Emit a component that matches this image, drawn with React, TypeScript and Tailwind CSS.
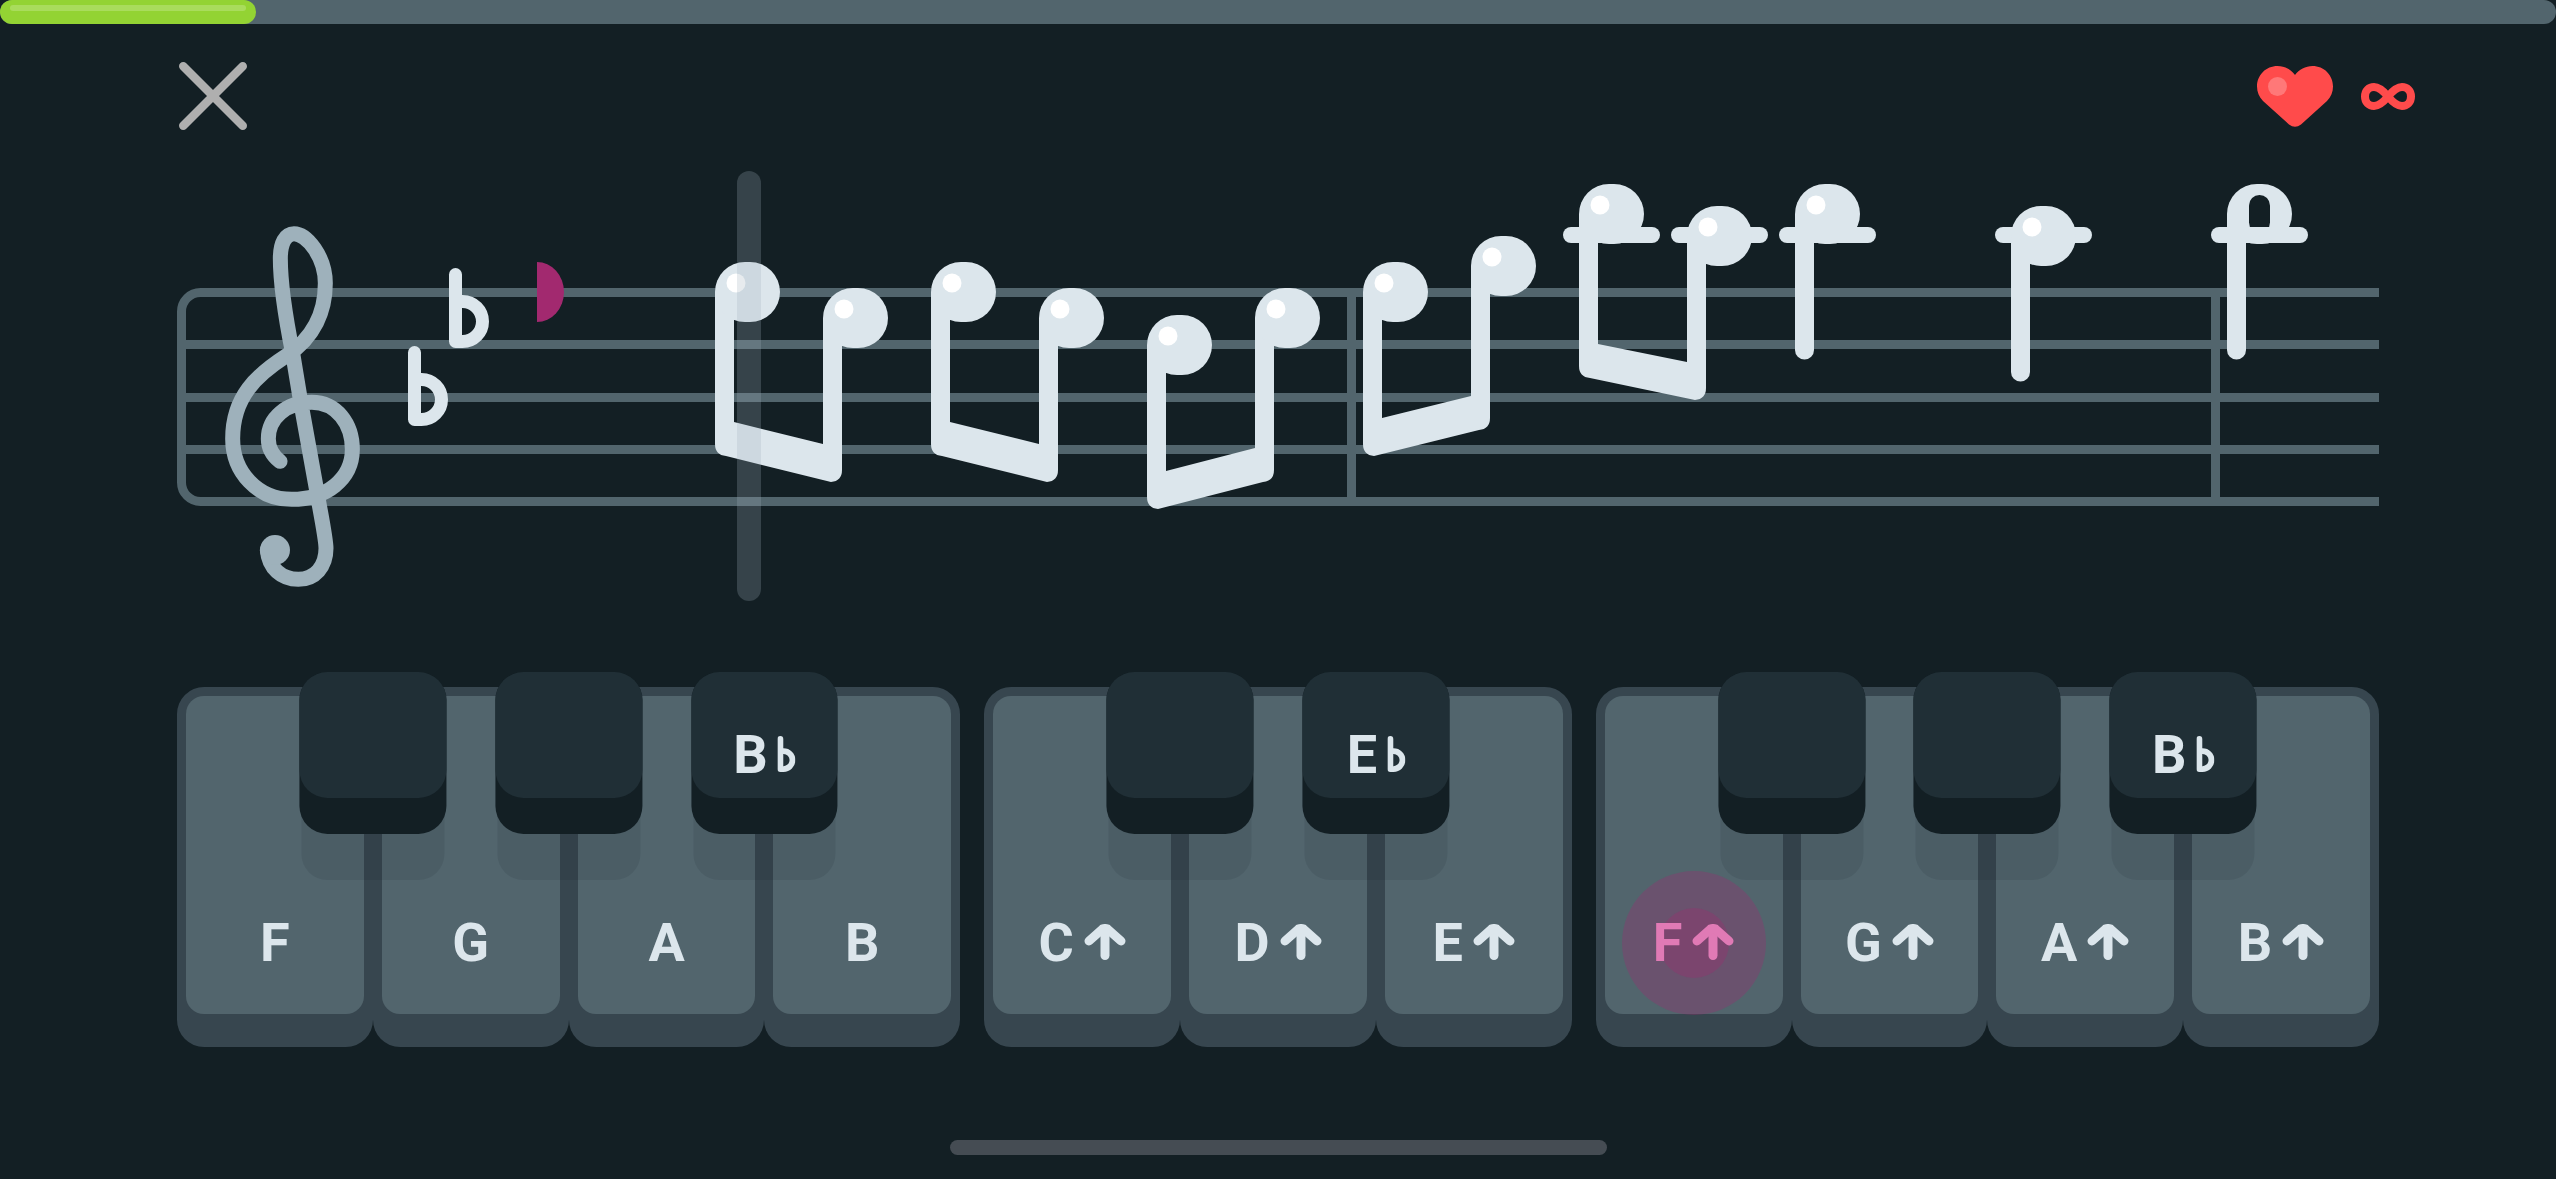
import React from 'react';

type KeyData = {
  note: string;
  high?: boolean;
  pressed?: boolean;
  // Black key that straddles this key and the next one
  black?: { note?: string };
};

type Point = { x: number; y: number };

const KEY_GROUPS: { size: string; keys: KeyData[] }[] = [
  {
    size: 'flex-[4]',
    keys: [
      { note: 'F', black: {} },
      { note: 'G', black: {} },
      { note: 'A', black: { note: 'B' } },
      { note: 'B' },
    ],
  },
  {
    size: 'flex-[3]',
    keys: [
      { note: 'C', high: true, black: {} },
      { note: 'D', high: true, black: { note: 'E' } },
      { note: 'E', high: true },
    ],
  },
  {
    size: 'flex-[4]',
    keys: [
      { note: 'F', high: true, pressed: true, black: {} },
      { note: 'G', high: true, black: {} },
      { note: 'A', high: true, black: { note: 'B' } },
      { note: 'B', high: true },
    ],
  },
];

const STAFF_LINES = [117, 169, 222, 274, 326];
const BAR_LINES = [1170, 2034];
const HEAD_W = 65;
const HEAD_H = 60;
const STEM_W = 19;

const BEAMED: [Point, Point][] = [
  [{ x: 538, y: 91 }, { x: 646, y: 117 }],
  [{ x: 754, y: 91 }, { x: 862, y: 117 }],
  [{ x: 970, y: 144 }, { x: 1078, y: 117 }],
  [{ x: 1186, y: 91 }, { x: 1294, y: 65 }],
  [{ x: 1402, y: 13 }, { x: 1510, y: 35 }],
];

function FlatShape() {
  return (
    <>
      <path d="M6.5 6.5 V73.5" strokeWidth="13" strokeLinecap="round" />
      <path d="M6.5 33.5 H13.5 A20 20 0 0 1 13.5 73.5 H6.5" strokeWidth="13" strokeLinejoin="round" />
    </>
  );
}

function FlatIcon() {
  return (
    <svg viewBox="0 0 40 80" className="h-9 w-[18px]" fill="none" stroke="currentColor" aria-hidden="true">
      <FlatShape />
    </svg>
  );
}

function ArrowUpIcon() {
  return (
    <svg viewBox="0 0 42 36" className="h-9 w-[42px]" fill="none" stroke="currentColor" strokeWidth="9" strokeLinecap="round" strokeLinejoin="round" aria-hidden="true">
      <path d="M21 8 V31.5" />
      <path d="M5 17 L18.5 5 Q21 4 23.5 5 L37 17" />
    </svg>
  );
}

function LedgerLine({ x }: { x: number }) {
  return <rect x={x - 16} y="56" width="97" height="16" rx="8" />;
}

function NoteHead({ x, y }: Point) {
  return (
    <>
      <rect x={x} y={y} width={HEAD_W} height={HEAD_H} rx="30" />
      <circle cx={x + 21} cy={y + 21} r="9.5" fill="#fff" />
    </>
  );
}

function BeamedPair({ left, right }: { left: Point; right: Point }) {
  const falling = right.y > left.y;
  const lx = left.x;
  const rx = right.x + STEM_W;
  const leftInner = left.y + (falling ? 160 : 156);
  const rightInner = right.y + (falling ? 156 : 160);
  const lb = left.y + 194;
  const rb = right.y + 194;
  return (
    <g>
      <path d={`M${lx} ${left.y + 30} H${lx + STEM_W} V${leftInner} L${right.x} ${rightInner} V${right.y + 30} H${rx} V${rb - 12} Q${rx} ${rb - 1} ${rx - 11} ${rb} L${lx + 11} ${lb} Q${lx} ${lb - 1} ${lx} ${lb - 12} Z`} />
      {[left, right].map((p) => (
        <g key={p.x}>
          {p.y < 60 && <LedgerLine x={p.x} />}
          <NoteHead x={p.x} y={p.y} />
        </g>
      ))}
    </g>
  );
}

function QuarterNote({ x, y }: Point) {
  return (
    <g>
      <path d={`M${x} ${y + 30} V${y + 166} a9.5 9.5 0 0 0 19 0 V${y + 30} Z`} />
      <LedgerLine x={x} />
      <NoteHead x={x} y={y} />
    </g>
  );
}

function HalfNote({ x, y }: Point) {
  return (
    <g>
      <path d={`M${x} ${y + 30} V${y + 166} a9.5 9.5 0 0 0 19 0 V${y + 30} Z`} />
      <rect x={x} y={y} width={HEAD_W} height={HEAD_H} rx="30" />
      <rect x={x + 22} y={y + 11} width="21" height="38" rx="10.5" fill="#131f24" />
      <LedgerLine x={x} />
    </g>
  );
}

function Staff() {
  return (
    <svg viewBox="0 0 2202 430" className="block h-auto w-full" role="img" aria-label="Sheet music">
      {/* Staff lines */}
      <g fill="#52656d">
        {STAFF_LINES.slice(1, 4).map((y) => (
          <rect key={y} x="4" y={y} width="2198" height="9" />
        ))}
        {BAR_LINES.map((x) => (
          <rect key={x} x={x} y="121" width="9" height="210" />
        ))}
      </g>
      <path d="M2202 121.5 H23.5 A19 19 0 0 0 4.5 140.5 V311.5 A19 19 0 0 0 23.5 330.5 H2202" fill="none" stroke="#52656d" strokeWidth="9" />

      {/* Treble clef */}
      <g transform="translate(-17 29) scale(.33333)">
        <path
          d="M360 784 C337 766 325 742 325 716 C325 655 378 607 455 607 C530 607 577 672 577 748 C577 838 498 898 395 898 C292 898 218 815 218 716 C218 590 290 525 378 468 C465 412 496 330 496 250 C496 170 440 101 402 101 C376 101 361 130 361 175 C361 245 380 370 398 460 L422 605 L468 860 C480 930 498 1015 498 1045 C498 1100 465 1138 415 1138 C365 1138 326 1105 322 1050"
          fill="none"
          stroke="#9eb1bb"
          strokeWidth="45"
          strokeLinecap="round"
          strokeLinejoin="round"
        />
        <circle cx="345" cy="1050" r="45" fill="#9eb1bb" />
      </g>

      {/* Key signature */}
      <g fill="none" stroke="#dce6ec">
        <g transform="translate(231 175)"><FlatShape /></g>
        <g transform="translate(272 97)"><FlatShape /></g>
      </g>

      {/* Note that has already been played */}
      <path d="M360 91 A27 30 0 0 1 360 151 Z" fill="#a2296f" />

      <g fill="#dce6ec">
        {BEAMED.map(([left, right]) => (
          <BeamedPair key={left.x} left={left} right={right} />
        ))}
        <QuarterNote x={1618} y={13} />
        <QuarterNote x={1834} y={35} />
        <HalfNote x={2050} y={13} />
      </g>

      {/* Playhead */}
      <rect x="560" y="0" width="24" height="430" rx="12" fill="#9eb1bb" fillOpacity=".25" />
    </svg>
  );
}

function BlackKey({ note }: { note?: string }) {
  return (
    <div className="absolute -top-[15px] right-0 z-10 w-3/4 translate-x-1/2">
      <span className="absolute inset-x-0.5 top-10 h-[168px] rounded-b-[26px] bg-[#131f24]/10" />
      <button
        type="button"
        aria-label={note ? `${note} flat` : 'Black key'}
        className="relative block w-full rounded-[28px] bg-[#131f24] pb-9"
      >
        <span className="flex h-[126px] items-end justify-center gap-2.5 rounded-[28px] bg-[#202f36] pb-4 text-[#dce6ec]">
          {note && (
            <>
              <span>{note}</span>
              <span className="pb-2.5"><FlatIcon /></span>
            </>
          )}
        </span>
      </button>
    </div>
  );
}

function WhiteKey({ data, first, last }: { data: KeyData; first: boolean; last: boolean }) {
  const { note, high, pressed, black } = data;
  return (
    <li className="relative min-w-0 flex-1">
      <button
        type="button"
        aria-label={high ? `${note} high` : note}
        className={`block w-full rounded-b-[27px] bg-[#37464f] px-[9px] pt-[9px] pb-[33px] ${first ? 'rounded-tl-[27px]' : ''} ${last ? 'rounded-tr-[27px]' : ''}`}
      >
        <span className="flex h-[318px] items-end justify-center rounded-[18px] bg-[#52656d] pb-11">
          <span className={`relative flex justify-center ${pressed ? 'text-[#e07ab5]' : 'text-[#dce6ec]'}`}>
            {pressed && (
              <span className="absolute top-1/2 left-1/2 flex size-36 -translate-x-1/2 -translate-y-1/2 items-center justify-center rounded-full bg-[#a2296f]/30">
                <span className="size-[70px] rounded-full bg-[#a2296f]/30" />
              </span>
            )}
            <span className="relative flex items-end gap-2.5">
              <span>{note}</span>
              {high && <span className="pb-2.5"><ArrowUpIcon /></span>}
            </span>
          </span>
        </span>
      </button>
      {black && <BlackKey note={black.note} />}
    </li>
  );
}

export default function App() {
  return (
    <main className="flex min-h-screen flex-col bg-[#131f24] font-['Roboto',sans-serif]">
      <div role="progressbar" aria-label="Lesson progress" aria-valuenow={10} aria-valuemin={0} aria-valuemax={100} className="h-6 rounded-full bg-[#52656d]">
        <div className="h-full w-1/10 rounded-full bg-[#93d333] px-2.5 pt-[5px]">
          <div className="h-1.5 rounded-full bg-[#a9dc5c]" />
        </div>
      </div>

      <header className="flex items-center justify-between pt-[38px] pr-[141px] pl-[179px]">
        <button type="button" aria-label="Close">
          <svg viewBox="0 0 68 68" className="block size-[68px]" fill="none" stroke="#afafaf" strokeWidth="8.5" strokeLinecap="round" aria-hidden="true">
            <path d="M4.25 4.25 L63.75 63.75 M63.75 4.25 L4.25 63.75" />
          </svg>
        </button>
        <div className="flex items-center gap-7" aria-label="Unlimited hearts">
          <svg viewBox="0 0 76 61" className="block h-[61px] w-[76px]" aria-hidden="true">
            <path d="M38 9 C34 3.5 27.5 0 20.5 0 C9 0 0 9 0 20.5 C0 26 2 31 6 35 L32 58.5 Q38 63 44 58.5 L70 35 C74 31 76 26 76 20.5 C76 9 67 0 55.5 0 C48.5 0 42 3.5 38 9 Z" fill="#ff4b4b" />
            <circle cx="20.5" cy="20.5" r="9.5" fill="#ff7878" />
          </svg>
          <svg viewBox="0 0 54 27" className="block h-[27px] w-[54px]" fill="none" stroke="#ff4b4b" strokeWidth="8" aria-hidden="true">
            <path d="M27 13.5 C22 7.5 18 4 13 4 C8 4 4 7.5 4 13.5 C4 19.5 8 23 13 23 C18 23 22 19.5 27 13.5 C32 7.5 36 4 41 4 C46 4 50 7.5 50 13.5 C50 19.5 46 23 41 23 C36 23 32 19.5 27 13.5 Z" />
          </svg>
        </div>
      </header>

      <section className="mt-[41px] px-[177px]">
        <Staff />
      </section>

      <section aria-label="Piano keyboard" className="mt-[86px] flex gap-6 px-[177px] text-[54px] leading-none font-bold">
        {KEY_GROUPS.map((group, i) => (
          <ul key={i} className={`flex min-w-0 ${group.size}`}>
            {group.keys.map((key, j) => (
              <WhiteKey key={j} data={key} first={j === 0} last={j === group.keys.length - 1} />
            ))}
          </ul>
        ))}
      </section>

      {/* Home indicator */}
      <div className="mx-auto mt-auto mb-6 h-[15px] w-[657px] max-w-full rounded-full bg-[#454c53]" />
    </main>
  );
}
